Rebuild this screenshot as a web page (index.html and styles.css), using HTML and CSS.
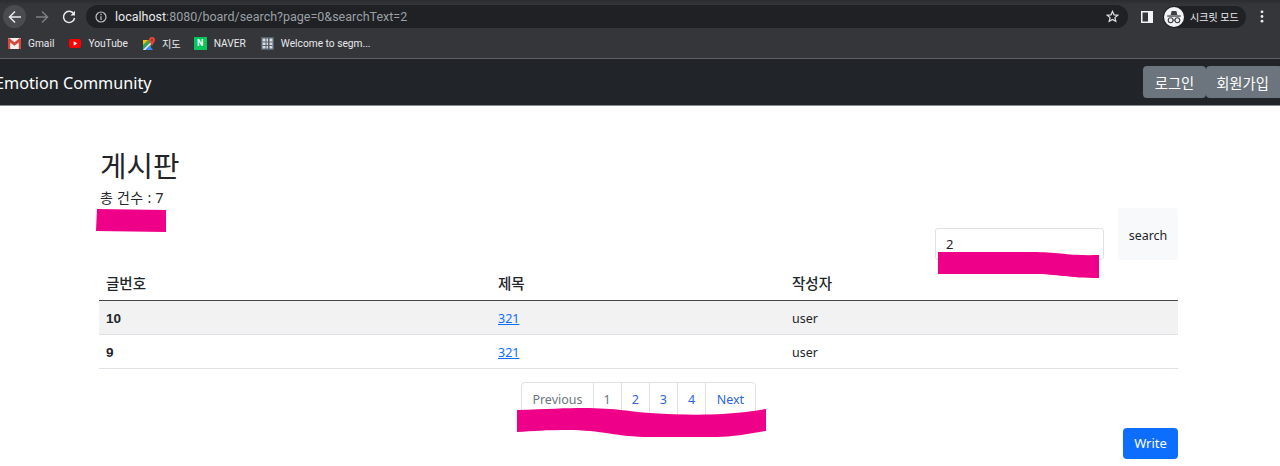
FILE: index.html
```html
<!DOCTYPE html>
<html lang="ko">
<head>
<meta charset="utf-8">
<title>Emotion Community</title>
<link rel="stylesheet" href="styles.css">
</head>
<body>
<header class="browser">
  <div class="toolbar">
    <span class="nav-btn nav-btn-active">
      <svg width="14" height="14" viewBox="0 0 14 14" fill="none" stroke="#e8eaed" stroke-width="1.500"><path d="M13 7H1.800M7 1.500L1.500 7 7 12.500"/></svg>
    </span>
    <span class="nav-btn">
      <svg width="14" height="14" viewBox="0 0 14 14" fill="none" stroke="#7d7f83" stroke-width="1.500"><path d="M1 7h11.200M7 1.500L12.500 7 7 12.500"/></svg>
    </span>
    <span class="nav-btn">
      <svg width="14" height="14" viewBox="0 0 14 14" fill="none" stroke="#e8eaed" stroke-width="1.500"><path d="M11.800 3.800A5.600 5.600 0 1 0 12.600 8"/><path d="M13 .8V5.400H8.400z" fill="#e8eaed" stroke="none"/></svg>
    </span>
    <div class="omnibox">
      <svg class="info-icon" width="12" height="12" viewBox="0 0 12 12" fill="none" stroke="#bdc1c6" stroke-width="1.200"><circle cx="6" cy="6" r="5"/><path d="M6 5.200v3.800M6 2.800v1.400"/></svg>
      <span class="url"><span class="url-host">localhost</span>:8080/board/search?page=0&amp;searchText=2</span>
      <svg class="star-icon" width="13" height="13" viewBox="0 0 15 15" fill="none" stroke="#dfe1e5" stroke-width="1.400"><path d="M7.500 1.600l1.800 4 4.300.4-3.300 2.800 1 4.200-3.800-2.200-3.800 2.200 1-4.200L1.400 6l4.300-.4z"/></svg>
    </div>
    <svg class="panel-icon" width="12" height="12" viewBox="0 0 12 12"><rect x="0.750" y="0.750" width="10.500" height="10.500" fill="none" stroke="#f1f3f4" stroke-width="1.500"/><rect x="7" y="1" width="4" height="10" fill="#f1f3f4"/></svg>
    <div class="incognito">
      <span class="incognito-badge">
        <svg width="16" height="16" viewBox="0 0 20 20" fill="#3c4043"><path d="M7 2.500h6l1.200 5H5.800z"/><rect x="1.500" y="8" width="17" height="1.600"/><circle cx="5.800" cy="14" r="3" fill="none" stroke="#3c4043" stroke-width="1.400"/><circle cx="14.200" cy="14" r="3" fill="none" stroke="#3c4043" stroke-width="1.400"/><rect x="8.500" y="13.300" width="3" height="1.200"/></svg>
      </span>
      <span class="incognito-label">시크릿 모드</span>
    </div>
    <svg class="kebab" width="4" height="13" viewBox="0 0 4 13" fill="#e8eaed"><circle cx="2" cy="1.800" r="1.400"/><circle cx="2" cy="6.500" r="1.400"/><circle cx="2" cy="11.200" r="1.400"/></svg>
  </div>
  <nav class="bookmarks">
    <span class="bookmark">
      <svg width="13" height="11" viewBox="0 0 13 11"><rect width="13" height="11" rx="1" fill="#f1f1f1"/><path d="M0 1V11h2.200V4.500L6.500 7.800l4.300-3.300V11H13V1L11.800 0 6.500 4.200 1.200 0z" fill="#d9463b"/></svg>
      <span>Gmail</span>
    </span>
    <span class="bookmark">
      <svg width="12" height="9" viewBox="0 0 12 9"><rect width="12" height="9" rx="2" fill="#f00"/><path d="M4.700 2.300v4.400L8.300 4.500z" fill="#fff"/></svg>
      <span>YouTube</span>
    </span>
    <span class="bookmark bookmark-tight">
      <svg width="12" height="13" viewBox="0 0 12 13"><path d="M0 3h8v10H0z" fill="#34a853"/><path d="M0 13L5 7l5 6z" fill="#4285f4"/><path d="M0 3h5L0 8z" fill="#fbbc05"/><path d="M8 7L2 13H0L8 5z" fill="#f1f1f1"/><path d="M9 0a3 3 0 0 1 3 3c0 2-2 3.500-3 6-1-2.500-3-4-3-6a3 3 0 0 1 3-3z" fill="#ea4335"/><circle cx="9" cy="3" r="1" fill="#8d2a22"/></svg>
      <span>지도</span>
    </span>
    <span class="bookmark">
      <span class="naver-icon">N</span>
      <span>NAVER</span>
    </span>
    <span class="bookmark">
      <svg width="13" height="13" viewBox="0 0 13 13"><rect width="13" height="13" fill="#56616e"/><rect x="1.500" y="1.500" width="3" height="10" fill="#d8dbdf"/><rect x="5.500" y="1.500" width="1.500" height="10" fill="#d8dbdf"/><rect x="8.500" y="1.500" width="3" height="10" fill="#d8dbdf"/><path d="M1.500 5h10M1.500 8.500h10" stroke="#56616e"/></svg>
      <span>Welcome to segm...</span>
    </span>
  </nav>
</header>

<header class="navbar">
  <a class="brand">Emotion Community</a>
  <div class="auth-group">
    <button class="auth-btn auth-btn-first">로그인</button>
    <button class="auth-btn auth-btn-last">회원가입</button>
  </div>
</header>

<main class="content">
  <h1 class="title">게시판</h1>
  <p class="total">총 건수 : 7</p>
  <div class="search-row">
    <input class="search-input" value="2" aria-label="search text">
    <button class="search-btn">search</button>
  </div>
  <table class="board">
    <thead>
      <tr><th class="col-no">글번호</th><th class="col-title">제목</th><th>작성자</th></tr>
    </thead>
    <tbody>
      <tr class="row-odd"><th>10</th><td><a href="#">321</a></td><td>user</td></tr>
      <tr><th>9</th><td><a href="#">321</a></td><td>user</td></tr>
    </tbody>
  </table>
  <ul class="pagination">
    <li class="page page-disabled">Previous</li>
    <li class="page page-num page-disabled">1</li>
    <li class="page page-num">2</li>
    <li class="page page-num">3</li>
    <li class="page page-num">4</li>
    <li class="page">Next</li>
  </ul>
  <div class="write-row"><button class="write-btn">Write</button></div>
</main>

<svg class="scribble scribble-a" width="71" height="24" viewBox="0 0 71 24"><path d="M1 1L70 2V24L0 23z" fill="#ee0088"/></svg>
<svg class="scribble scribble-b" width="161" height="26" viewBox="0 0 161 26"><path d="M0 0H95C120 0 130 4 161 3V26C130 26 120 22 95 22H0z" fill="#ee0088"/></svg>
<svg class="scribble scribble-c" width="250" height="30" viewBox="0 0 250 30"><path d="M0 2C30 1 50 0 66 0 100 0 115 4 133 5 160 7 190 7 205 6 225 5 238 3 249 1V23C232 26 215 29 200 29H133C100 29 85 22 50 22 30 22 15 23 0 24z" fill="#ee0088"/></svg>
</body>
</html>
```
FILE: styles.css
```css
* { box-sizing: border-box; }
html, body { margin: 0; padding: 0; }
body {
  position: relative;
  height: 466px;
  overflow: hidden;
  background: #fff;
  color: #212529;
  font-family: "Noto Sans", "Noto Sans CJK KR", sans-serif;
  font-size: 14px;
}

.browser { background: #35363a; border-bottom: 1px solid #5f6063; }
.toolbar {
  display: flex;
  align-items: center;
  height: 34px;
  padding: 0 0 1px 3px;
  background: linear-gradient(#2b2c2f, #35363a 5px);
}
.nav-btn {
  display: flex;
  align-items: center;
  justify-content: center;
  width: 23px;
  height: 23px;
  margin-right: 4px;
  border-radius: 50%;
}
.nav-btn-active { background: #4a4b4f; }
.omnibox {
  display: flex;
  align-items: center;
  width: 1042px;
  height: 23px;
  margin-left: 2px;
  padding: 0 9px;
  border-radius: 12px;
  background: #202124;
}
.info-icon { flex: none; }
.url {
  flex: 1;
  margin-left: 8px;
  color: #9aa0a6;
  font-family: Roboto, sans-serif;
  font-size: 12.500px;
  white-space: nowrap;
}
.url-host { color: #e8eaed; }
.panel-icon { margin-left: 13px; flex: none; }
.incognito {
  display: flex;
  align-items: center;
  width: 83px;
  height: 22px;
  margin-left: 10px;
  border-radius: 11px;
  background: #202124;
}
.incognito-badge {
  display: flex;
  align-items: center;
  justify-content: center;
  width: 20px;
  height: 20px;
  margin-left: 1px;
  border-radius: 50%;
  background: #f1f3f4;
}
.incognito-label {
  margin-left: 6px;
  color: #e8eaed;
  font-size: 10px;
  white-space: nowrap;
}
.kebab { margin-left: 14px; flex: none; }

.bookmarks {
  display: flex;
  align-items: center;
  gap: 15px;
  height: 24px;
  padding: 0 0 6px 8px;
  color: #e8eaed;
  font-family: Roboto, "Noto Sans CJK KR", sans-serif;
  font-size: 10.200px;
}
.bookmark { display: flex; align-items: center; gap: 7px; white-space: nowrap; }
.bookmark-tight { margin-right: -2px; }
.naver-icon {
  display: flex;
  align-items: center;
  justify-content: center;
  width: 13px;
  height: 13px;
  background: #03c75a;
  color: #fff;
  font-size: 9px;
  font-weight: 700;
}

.navbar {
  display: flex;
  align-items: center;
  justify-content: space-between;
  height: 47px;
  background: #212529;
  border-bottom: 1px solid #8b8d90;
}
.brand {
  margin-left: -5px;
  padding-top: 2px;
  color: #fff;
  font-size: 16.200px;
  white-space: nowrap;
}
.auth-group { display: flex; }
.auth-btn {
  height: 32px;
  border: 0;
  background: #6c757d;
  color: #fff;
  font-family: inherit;
  font-size: 14.300px;
  padding: 0;
  border-radius: 4px;
}
.auth-btn-first { width: 63px; }
.auth-btn-last { width: 76px; margin-right: -2px; padding-right: 3px; }

.content { padding: 0 102px 0 99px; }
.title {
  margin: 0;
  padding: 43px 0 0 1px;
  font-size: 28.800px;
  font-weight: 400;
  line-height: 34px;
}
.total {
  margin: 0;
  padding: 6px 0 0 1px;
  font-size: 14px;
  letter-spacing: .3px;
  line-height: 18px;
}
.search-row {
  display: flex;
  align-items: flex-end;
  justify-content: flex-end;
  gap: 14px;
  margin-top: 1px;
}
.search-input {
  width: 169px;
  height: 32px;
  padding: 0 10px;
  border: 1px solid #dee2e6;
  border-radius: 3px;
  color: #212529;
  font-family: inherit;
  font-size: 13px;
}
.search-btn {
  width: 60px;
  height: 52px;
  border: 0;
  border-radius: 3px;
  background: #f8f9fa;
  color: #212529;
  font-family: inherit;
  font-size: 12.500px;
  padding: 2px 0 0;
}

.board {
  width: 100%;
  margin-top: 5px;
  border-collapse: collapse;
  table-layout: fixed;
  font-size: 12.500px;
}
.board th, .board td {
  height: 34px;
  padding: 2px 7px 0;
  text-align: left;
  border-bottom: 1px solid #dee2e6;
}
.board thead th {
  height: 35px;
  padding-top: 0;
  border-bottom: 1px solid #44474a;
  font-weight: 500;
  font-size: 14.500px;
}
.board tbody th { font-family: "Liberation Sans", sans-serif; font-size: 13.500px; font-weight: 700; }
.col-no { width: 392px; }
.col-title { width: 294px; }
.row-odd { background: #f2f2f2; }
.board a { color: #0d6efd; }

.pagination {
  display: flex;
  justify-content: center;
  width: max-content;
  margin: 13px auto 0;
  padding: 0;
  list-style: none;
  font-size: 12.500px;
}
.page {
  height: 35px;
  margin-left: -1px;
  padding: 8px 10.500px 0;
  border: 1px solid #dee2e6;
  color: #2b66e0;
}
.page-num { padding: 8px 10px 0; }
.page:first-child { margin-left: 0; padding: 8px 10px 0; border-radius: 4px 0 0 4px; }
.page:last-child { border-radius: 0 4px 4px 0; }
.page-disabled { color: #6c757d; }

.write-row { display: flex; justify-content: flex-end; margin-top: 11px; }
.write-btn {
  width: 55px;
  height: 31px;
  border: 0;
  border-radius: 4px;
  background: #0d6efd;
  color: #fff;
  font-family: inherit;
  font-size: 13px;
  padding: 0;
}

.scribble { position: absolute; display: block; }
.scribble-a { left: 96px; top: 208px; }
.scribble-b { left: 938px; top: 252px; }
.scribble-c { left: 517px; top: 408px; }
```
